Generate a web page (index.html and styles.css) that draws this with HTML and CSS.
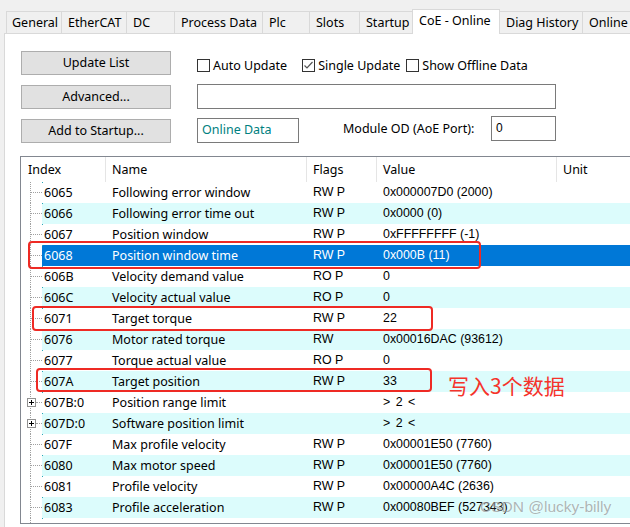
FILE: index.html
```html
<!DOCTYPE html>
<html>
<head>
<meta charset="utf-8">
<link rel="stylesheet" href="styles.css">
</head>
<body>
<div class="tabs">
  <div class="tab w-general">General</div>
  <div class="tab w-ethercat">EtherCAT</div>
  <div class="tab w-dc">DC</div>
  <div class="tab w-pd">Process Data</div>
  <div class="tab w-plc">Plc</div>
  <div class="tab w-slots">Slots</div>
  <div class="tab w-startup">Startup</div>
  <div class="tab active w-coe">CoE - Online</div>
  <div class="tab w-diag">Diag History</div>
  <div class="tab w-online">Online</div>
</div>
<div class="panel">
  <div class="controls">
    <div class="buttons">
      <div class="btn">Update List</div>
      <div class="btn">Advanced...</div>
      <div class="btn">Add to Startup...</div>
    </div>
    <div class="right">
      <div class="checks">
        <span class="chk"><span class="box"></span>Auto Update</span>
        <span class="chk"><span class="box checked"><svg width="11" height="11" viewBox="0 0 11 11"><path d="M1.5 5.5 L4 8 L9.5 2" fill="none" stroke="#555" stroke-width="1.2"/></svg></span>Single Update</span>
        <span class="chk"><span class="box"></span>Show Offline Data</span>
      </div>
      <div class="field wide"></div>
      <div class="row3">
        <div class="field online">Online Data</div>
        <div class="modlabel">Module OD (AoE Port):</div>
        <div class="field port">0</div>
      </div>
    </div>
  </div>
  <div class="table">
    <div class="thead">
      <div class="th c-idx">Index</div>
      <div class="th c-name">Name</div>
      <div class="th c-flags">Flags</div>
      <div class="th c-val">Value</div>
      <div class="th c-unit">Unit</div>
    </div>
    <div class="tbody">
      <div class="tr"><div class="tree"></div><div class="cells"><div class="td c-i">6065</div><div class="td c-name">Following error window</div><div class="td c-flags ms">RW P</div><div class="td c-val ms">0x000007D0 (2000)</div><div class="td"></div></div></div>
      <div class="tr alt"><div class="tree"></div><div class="cells"><div class="td c-i">6066</div><div class="td c-name">Following error time out</div><div class="td c-flags ms">RW P</div><div class="td c-val ms">0x0000 (0)</div><div class="td"></div></div></div>
      <div class="tr"><div class="tree"></div><div class="cells"><div class="td c-i">6067</div><div class="td c-name">Position window</div><div class="td c-flags ms">RW P</div><div class="td c-val ms">0xFFFFFFFF (-1)</div><div class="td"></div></div></div>
      <div class="tr sel"><div class="tree"></div><div class="cells"><div class="td c-i">6068</div><div class="td c-name">Position window time</div><div class="td c-flags ms">RW P</div><div class="td c-val ms">0x000B (11)</div><div class="td"></div></div></div>
      <div class="tr"><div class="tree"></div><div class="cells"><div class="td c-i">606B</div><div class="td c-name">Velocity demand value</div><div class="td c-flags ms">RO P</div><div class="td c-val ms">0</div><div class="td"></div></div></div>
      <div class="tr alt"><div class="tree"></div><div class="cells"><div class="td c-i">606C</div><div class="td c-name">Velocity actual value</div><div class="td c-flags ms">RO P</div><div class="td c-val ms">0</div><div class="td"></div></div></div>
      <div class="tr"><div class="tree"></div><div class="cells"><div class="td c-i">6071</div><div class="td c-name">Target torque</div><div class="td c-flags ms">RW P</div><div class="td c-val ms">22</div><div class="td"></div></div></div>
      <div class="tr alt"><div class="tree"></div><div class="cells"><div class="td c-i">6076</div><div class="td c-name">Motor rated torque</div><div class="td c-flags ms">RW</div><div class="td c-val ms">0x00016DAC (93612)</div><div class="td"></div></div></div>
      <div class="tr"><div class="tree"></div><div class="cells"><div class="td c-i">6077</div><div class="td c-name">Torque actual value</div><div class="td c-flags ms">RO P</div><div class="td c-val ms">0</div><div class="td"></div></div></div>
      <div class="tr alt"><div class="tree"></div><div class="cells"><div class="td c-i">607A</div><div class="td c-name">Target position</div><div class="td c-flags ms">RW P</div><div class="td c-val ms">33</div><div class="td"></div></div></div>
      <div class="tr"><div class="tree plus"><span class="pbox"></span></div><div class="cells"><div class="td c-i">607B:0</div><div class="td c-name">Position range limit</div><div class="td c-flags ms"></div><div class="td c-val ms gt">&gt; 2 &lt;</div><div class="td"></div></div></div>
      <div class="tr alt"><div class="tree plus"><span class="pbox"></span></div><div class="cells"><div class="td c-i">607D:0</div><div class="td c-name">Software position limit</div><div class="td c-flags ms"></div><div class="td c-val ms gt">&gt; 2 &lt;</div><div class="td"></div></div></div>
      <div class="tr"><div class="tree"></div><div class="cells"><div class="td c-i">607F</div><div class="td c-name">Max profile velocity</div><div class="td c-flags ms">RW P</div><div class="td c-val ms">0x00001E50 (7760)</div><div class="td"></div></div></div>
      <div class="tr alt"><div class="tree"></div><div class="cells"><div class="td c-i">6080</div><div class="td c-name">Max motor speed</div><div class="td c-flags ms">RW P</div><div class="td c-val ms">0x00001E50 (7760)</div><div class="td"></div></div></div>
      <div class="tr"><div class="tree"></div><div class="cells"><div class="td c-i">6081</div><div class="td c-name">Profile velocity</div><div class="td c-flags ms">RW P</div><div class="td c-val ms">0x00000A4C (2636)</div><div class="td"></div></div></div>
      <div class="tr alt"><div class="tree"></div><div class="cells"><div class="td c-i">6083</div><div class="td c-name">Profile acceleration</div><div class="td c-flags ms">RW P</div><div class="td c-val ms">0x00080BEF (527343)</div><div class="td"></div></div></div>
      <div class="tr"><div class="tree"></div><div class="cells"><div class="td c-i"></div><div class="td c-name"></div><div class="td c-flags ms"></div><div class="td c-val ms"></div><div class="td"></div></div></div>
    </div>
    <div class="mark m1"></div>
    <div class="mark m2"></div>
    <div class="mark m3"></div>
    <div class="note">写入3个数据</div>
    <div class="wm">CSDN @lucky-billy</div>
  </div>
</div>
</body>
</html>
```
FILE: styles.css
```css
html, body {
  margin: 0;
  padding: 0;
}
body {
  width: 630px;
  height: 527px;
  overflow: hidden;
  background: #f0f0f0;
  font-family: "Noto Sans", "Noto Sans CJK SC", sans-serif;
  font-size: 12.5px;
  color: #000;
}
.tabs {
  display: flex;
  align-items: flex-end;
  padding-left: 6px;
  height: 33px;
  position: relative;
  z-index: 2;
}
.tab {
  box-sizing: border-box;
  height: 22px;
  border-top: 1px solid #d9d9d9;
  border-right: 1px solid #d9d9d9;
  background: #f0f0f0;
  padding-left: 6px;
  line-height: 21px;
  white-space: nowrap;
  flex: none;
}
.tab:first-child { border-left: 1px solid #d9d9d9; padding-left: 5px; }
.tab.active {
  height: 25px;
  margin-bottom: -1px;
  background: #fff;
  border-left: 1px solid #d9d9d9;
  margin-left: -1px;
  line-height: 22px;
  padding-left: 6px;
}
.w-general { width: 56px; }
.w-ethercat { width: 65px; }
.w-dc { width: 48px; }
.w-pd { width: 88px; }
.w-plc { width: 47px; }
.w-slots { width: 50px; }
.w-startup { width: 53px; }
.w-coe { width: 88px; }
.w-diag { width: 83px; }
.w-online { width: 50px; }
.panel {
  margin-left: 4px;
  height: 494px;
  background: #fff;
  border-left: 1px solid #d9d9d9;
  border-top: 1px solid #d9d9d9;
  box-sizing: border-box;
  padding: 17px 0 0 16px;
}
.controls {
  display: flex;
  gap: 26px;
}
.buttons {
  display: flex;
  flex-direction: column;
  gap: 10px;
}
.btn {
  box-sizing: border-box;
  width: 150px;
  height: 24px;
  background: #e1e1e1;
  border: 1px solid #adadad;
  text-align: center;
  line-height: 21px;
}
.right {
  display: flex;
  flex-direction: column;
  width: 359px;
}
.checks {
  display: flex;
  height: 33px;
  align-items: center;
  padding-bottom: 4px;
  box-sizing: border-box;
}
.chk {
  display: flex;
  align-items: center;
  white-space: nowrap;
}
.chk:nth-child(1) { margin-right: 15px; }
.chk:nth-child(2) { margin-right: 6px; }
.box {
  box-sizing: border-box;
  width: 13px;
  height: 13px;
  border: 1px solid #333;
  margin-right: 3px;
  display: flex;
  align-items: center;
  justify-content: center;
  background: #fff;
}
.box.checked { border-color: #333; }
.field {
  box-sizing: border-box;
  border: 1px solid #7a7a7a;
  height: 25px;
  background: #fff;
}
.wide { width: 359px; }
.row3 {
  display: flex;
  align-items: center;
  margin-top: 9px;
}
.online {
  width: 102px;
  color: #008080;
  padding-left: 4px;
  line-height: 22px;
}
.modlabel {
  margin-left: 44px;
  width: 148px;
  margin-top: -4px;
}
.port {
  width: 65px;
  padding-left: 4px;
  line-height: 22px;
  font-family: "Liberation Sans", sans-serif;
  font-size: 12px;
  margin-top: -4px;
}
.table {
  position: relative;
  margin-top: 13px;
  margin-left: -1px;
  width: 640px;
  height: 368px;
  box-sizing: border-box;
  border: 1px solid #828790;
  overflow: hidden;
}
.thead {
  display: flex;
  height: 25px;
}
.th {
  box-sizing: border-box;
  border-right: 1px solid #e5e5e5;
  line-height: 25px;
  padding-left: 7px;
  flex: none;
}
.thead .c-idx { width: 85px; padding-left: 7px; }
.thead .c-name { width: 201px; padding-left: 6px; }
.thead .c-flags { width: 70px; padding-left: 6px; }
.thead .c-val { width: 180px; padding-left: 6px; }
.thead .c-unit { flex: 1; border-right: none; padding-left: 6px; }
.tr {
  display: flex;
  height: 21px;
}
.tree {
  position: relative;
  width: 21px;
  flex: none;
}
.tree::before {
  content: "";
  position: absolute;
  left: 9px;
  top: 0;
  bottom: 0;
  border-left: 1px dotted #a0a0a0;
}
.tree::after {
  content: "";
  position: absolute;
  left: 10px;
  width: 11px;
  top: 10px;
  border-top: 1px dotted #a0a0a0;
}
.tree.plus::after { left: 15px; width: 6px; }
.pbox {
  position: absolute;
  left: 6px;
  top: 6px;
  width: 9px;
  height: 9px;
  box-sizing: border-box;
  border: 1px solid #919191;
  background: #fff;
  z-index: 1;
}
.pbox::before {
  content: "";
  position: absolute;
  left: 1px;
  top: 3px;
  width: 5px;
  height: 1px;
  background: #000;
}
.pbox::after {
  content: "";
  position: absolute;
  left: 3px;
  top: 1px;
  width: 1px;
  height: 5px;
  background: #000;
}
.cells {
  display: flex;
  flex: 1;
  padding-left: 1px;
  background-image: linear-gradient(#2aa8b8, #2aa8b8);
  background-size: 1px 1px;
  background-repeat: no-repeat;
  background-position: 0 0;
}
.tr.alt .cells { background-color: #dcfcfc; }
.tr.sel .cells { background-color: #0078d7; color: #fff; }
.td {
  line-height: 21px;
  white-space: nowrap;
  flex: none;
  box-sizing: border-box;
}
.c-i { width: 63px; padding-left: 1px; }
.tbody .c-name { width: 201px; padding-left: 6px; }
.tbody .c-flags { width: 70px; padding-left: 6px; }
.tbody .c-val { width: 180px; padding-left: 6px; }
.ms {
  font-family: "Liberation Sans", sans-serif;
  font-size: 12.4px;
}
.gt { word-spacing: 2px; }
.mark {
  position: absolute;
  box-sizing: border-box;
  border: 2.5px solid #ee2a24;
  border-radius: 4px;
}
.m1 { left: 7px; top: 84px; width: 453px; height: 28px; }
.m2 { left: 11px; top: 149px; width: 401px; height: 25px; }
.m3 { left: 15px; top: 211px; width: 396px; height: 24px; }
.note {
  position: absolute;
  left: 427px;
  top: 216px;
  color: #f5332b;
  font-family: "Noto Sans CJK SC", sans-serif;
  font-size: 21px;
  line-height: 24px;
}
.wm {
  position: absolute;
  left: 459px;
  top: 340px;
  color: rgba(120, 120, 120, 0.55);
  font-family: "Liberation Sans", sans-serif;
  font-size: 15.5px;
  line-height: 20px;
  text-shadow: 0 0 2px rgba(255,255,255,0.8);
}
```
